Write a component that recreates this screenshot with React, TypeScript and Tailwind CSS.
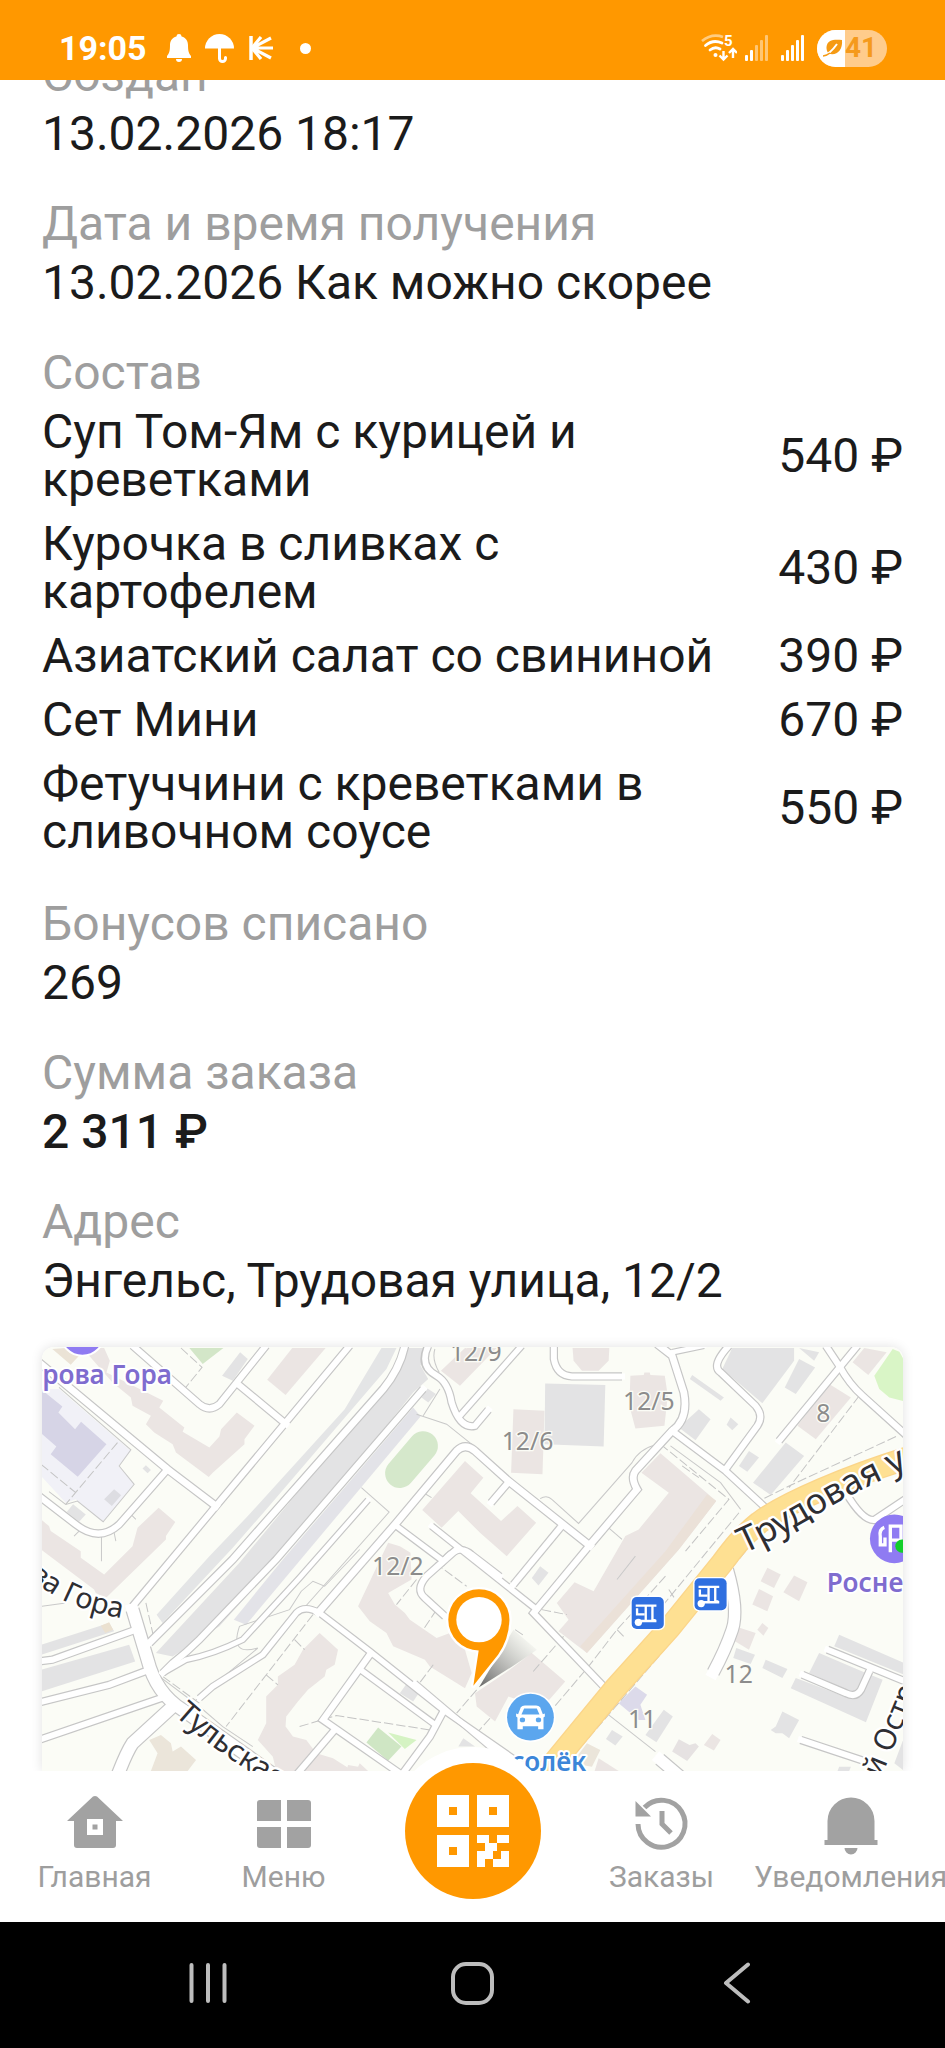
import type { ReactNode } from "react";

type OrderItem = {
  name: string;
  price: number;
};

type Road = {
  d: string;
  width: number;
};

type Shape = {
  points: string;
  fill: string;
};

const items: OrderItem[] = [
  { name: "Суп Том-Ям с курицей и креветками", price: 540 },
  { name: "Курочка в сливках с картофелем", price: 430 },
  { name: "Азиатский салат со свининой", price: 390 },
  { name: "Сет Мини", price: 670 },
  { name: "Фетуччини с креветками в сливочном соусе", price: 550 },
];

const PINK = "#ebe5e3";
const GRAY = "#e3e3e4";

// The map is split in four tiles, every tile has its own origin
const tiles = [
  {
    x: 0,
    y: 0,
    shapes: [
      { points: "126,180 180,180 395,365 358,410 405,465 310,578 230,510 200,520 126,440", fill: "#f1f1f7" },
      { points: "126,180 190,232 178,250 228,300 246,278 322,345 236,442 155,375 172,352 126,312", fill: "#d6d4e6" },
      { points: "160,60 215,107 240,80 200,57", fill: "#ebe3d6" },
      { points: "250,57 315,57 332,95 322,130 492,215 480,235 555,295 550,308 630,355 660,322 665,300 712,250 765,290 735,330 735,345 640,430 628,443 530,370 520,345 465,310 440,285 455,260 400,230 395,205 340,160", fill: PINK },
      { points: "878,57 978,57 858,198 803,152", fill: PINK },
      { points: "668,140 722,70 745,90 700,155", fill: GRAY },
      { points: "570,57 672,57 610,105", fill: "#d3e6c8" },
      { points: "1145,57 1190,57 1160,120 800,540 700,655 490,880 472,855 630,680 745,560 1035,240", fill: "#e4e5e6" },
      { points: "1225,57 1280,57 1262,110 1285,150 1240,190 840,690 660,890 520,980 470,970 720,700 1150,180", fill: GRAY },
      { points: "1240,235 1262,262 740,885 703,870 850,690", fill: "#e3e3e8" },
      { points: "1283,178 1308,195 1285,220 1265,205", fill: GRAY },
      { points: "440,408 455,422 445,432 430,418", fill: GRAY },
      { points: "345,480 366,498 338,530 315,510", fill: "#dddde2" },
      { points: "222,525 260,555 240,577 203,548", fill: GRAY },
      { points: "1395,395 1450,445 1412,492 1503,575 1552,530 1608,580 1520,680 1440,610 1375,545 1325,595 1267,542", fill: PINK },
      { points: "1395,57 1490,57 1380,170 1323,125", fill: PINK },
      { points: "126,570 150,590 155,605 245,665 245,685 315,735 400,650 415,595 478,535 528,578 500,620 500,630 320,805 290,790 285,780 126,660", fill: PINK },
    ],
  },
  {
    x: 1395,
    y: 0,
    shapes: [
      { points: "145,240 238,245 232,435 138,430", fill: PINK },
      { points: "240,163 420,168 415,352 238,345", fill: GRAY },
      { points: "322,57 432,57 430,95 400,125 350,125 325,95", fill: PINK },
      { points: "495,140 535,138 537,130 553,130 555,138 598,140 607,200 597,290 510,298 492,230", fill: PINK },
      { points: "800,57 985,57 985,95 890,222 770,120", fill: GRAY },
      { points: "1000,57 1060,70 1045,95", fill: GRAY },
      { points: "1000,90 1048,115 990,195 957,175", fill: GRAY },
      { points: "1195,57 1262,70 1207,138 1160,100", fill: PINK },
      { points: "1280,60 1300,68 1315,95 1315,217 1270,205 1240,180 1225,140", fill: "#d9f5c6" },
      { points: "1090,165 1155,205 1050,330 995,290", fill: PINK },
      { points: "680,138 775,205 765,215 673,150", fill: GRAY },
      { points: "700,240 735,270 690,333 640,295", fill: GRAY },
      { points: "795,265 818,285 800,303 783,287", fill: GRAY },
      { points: "850,365 880,385 845,427 820,410", fill: GRAY },
      { points: "960,340 1015,380 915,497 862,460", fill: GRAY },
      { points: "585,372 752,515 640,660 365,970 280,905 310,870 275,820 328,758 385,785 480,620 520,600 610,490 528,430", fill: PINK },
      { points: "725,495 752,515 640,660 365,970 345,950 600,665", fill: "#ebe1d8" },
    ],
  },
  {
    x: 0,
    y: 660,
    shapes: [
      { points: "1165,-20 1200,-10 1232,10 1235,90 1165,130 1185,165 1215,190 1230,210 1310,265 1350,250 1395,300 1415,370 1395,415 1290,350 1275,330 1180,290 1160,250 1110,215 1075,170", fill: PINK },
      { points: "960,250 1015,300 1005,345 980,360 975,380 925,420 895,455 860,500 858,530 880,560 920,570 950,610 1000,625 1060,663 830,663 820,620 775,570 800,520 800,440 835,405 835,380 885,345 910,300", fill: PINK },
      { points: "1040,663 1045,645 1075,650 1080,640 1105,663", fill: PINK },
      { points: "1225,395 1260,425 1240,455 1200,430", fill: GRAY },
      { points: "1390,565 1425,590 1375,590", fill: GRAY },
      { points: "1135,533 1205,590 1165,632 1100,578", fill: "#cfe6c4" },
      { points: "1165,548 1250,570 1215,597", fill: "#d5f3c3" },
      { points: "485,555 515,580 520,605 545,590 590,630 565,663 455,663 475,610 450,570", fill: "#ebe5da" },
      { points: "126,285 330,220 345,245 126,315", fill: GRAY },
      { points: "305,228 330,218 342,240 318,250", fill: "#ebe1d0" },
      { points: "126,360 390,285 408,335 126,425", fill: GRAY },
    ],
  },
  {
    x: 1395,
    y: 660,
    shapes: [
      { points: "120,370 200,310 300,395 230,475 130,440 90,515 35,470 30,430", fill: PINK },
      { points: "225,50 250,70 220,108 200,85", fill: GRAY },
      { points: "905,55 945,75 925,115 885,95", fill: PINK },
      { points: "985,78 1025,98 1000,155 953,128", fill: PINK },
      { points: "880,118 922,140 905,185 860,165", fill: PINK },
      { points: "890,220 908,235 893,258 875,240", fill: PINK },
      { points: "815,232 870,250 850,300 808,275", fill: PINK },
      { points: "812,295 868,315 855,343 803,325", fill: GRAY },
      { points: "900,330 965,358 950,385 890,355", fill: GRAY },
      { points: "1120,255 1315,340 1315,375 1105,290", fill: GRAY },
      { points: "1060,310 1200,370 1165,430 1030,370", fill: GRAY },
      { points: "990,385 1150,445 1200,370 1250,390 1200,517 975,415", fill: GRAY },
      { points: "950,485 1000,510 970,565 950,550 930,550 915,540 930,530", fill: GRAY },
      { points: "510,410 545,435 525,465 540,510 520,510 460,460", fill: "#dcdaea" },
      { points: "595,480 622,500 573,577 540,555", fill: GRAY },
      { points: "440,540 472,560 450,587 422,567", fill: GRAY },
      { points: "640,568 672,585 690,580 700,590 665,633 620,605", fill: "#e6e2e2" },
      { points: "740,552 765,570 745,602 715,585", fill: PINK },
      { points: "365,580 405,600 380,650 320,640", fill: "#ebe5da" },
      { points: "400,625 460,663 388,663", fill: PINK },
      { points: "1120,650 1155,650 1150,663 1115,663", fill: GRAY },
      { points: "1315,560 1315,663 1285,640", fill: GRAY },
    ],
  },
] as { x: number; y: number; shapes: Shape[] }[];

const roads: (Road & { x: number; y: number })[] = [
  { x: 0, y: 0, width: 20, d: "M120,100 L505,420 L650,530" },
  { x: 0, y: 0, width: 18, d: "M1050,50 L650,530 L400,830" },
  { x: 0, y: 0, width: 18, d: "M400,50 L600,225 Q630,250 660,225 L800,50" },
  { x: 0, y: 0, width: 18, d: "M715,165 L860,285" },
  { x: 0, y: 0, width: 18, d: "M120,500 L230,585 Q300,640 360,585 L505,420" },
  { x: 0, y: 0, width: 20, d: "M1215,50 Q1200,120 1150,180 L700,690 L450,940" },
  { x: 0, y: 0, width: 18, d: "M1270,180 L830,690 L600,930 Q560,970 520,1000 L490,1030" },
  { x: 0, y: 0, width: 18, d: "M1285,50 Q1255,110 1310,140 Q1345,160 1355,220 Q1380,300 1425,290 L1465,242" },
  { x: 0, y: 0, width: 16, d: "M1380,260 L1565,50" },
  { x: 0, y: 0, width: 14, d: "M1105,512 L900,745 L730,930 Q640,975 560,990 L490,1030" },
  { x: 0, y: 0, width: 20, d: "M955,850 L1190,580 L1370,365 Q1395,340 1425,365 L1525,455 L1770,650" },
  { x: 0, y: 0, width: 16, d: "M1190,590 L1330,695 Q1375,640 1415,675 L1500,740" },
  { x: 1395, y: 0, width: 20, d: "M375,645 L515,480 Q495,445 510,425 L620,305 Q670,270 655,190 L620,80 L575,45" },
  { x: 1395, y: 0, width: 14, d: "M620,70 L715,50" },
  { x: 1395, y: 0, width: 18, d: "M375,645 L205,850 L420,1075" },
  { x: 1395, y: 0, width: 16, d: "M-100,590 L215,840" },
  { x: 1395, y: 0, width: 18, d: "M285,595 L145,765" },
  { x: 1395, y: 0, width: 18, d: "M125,465 L78,520" },
  { x: 1395, y: 0, width: 18, d: "M266,50 V90 Q275,140 320,142 L470,142" },
  { x: 1395, y: 0, width: 18, d: "M620,305 L780,425 L910,545" },
  { x: 1395, y: 0, width: 18, d: "M790,50 Q735,110 765,130 L870,230 Q895,260 875,290 L780,420" },
  { x: 1395, y: 0, width: 18, d: "M1175,50 L940,335" },
  { x: 1395, y: 0, width: 18, d: "M1080,50 L1120,110 Q1150,165 1190,200 L1325,322" },
  { x: 1395, y: 0, width: 18, d: "M1140,490 Q1190,575 1225,572 L1325,505" },
  { x: 1395, y: 660, width: 34, d: "M785,60 Q820,180 800,240 Q780,300 743,368" },
  { x: 1395, y: 660, width: 18, d: "M1085,300 L1325,398" },
  { x: 1395, y: 660, width: 18, d: "M1010,375 L1140,430 Q1170,445 1185,420 L1210,365" },
  { x: 1395, y: 660, width: 18, d: "M1005,570 L1215,640" },
  { x: 1395, y: 660, width: 34, d: "M583,628 L650,685" },
  { x: 1395, y: 660, width: 14, d: "M-150,400 L180,680" },
  { x: 0, y: 660, width: 18, d: "M120,335 L160,330 L410,240" },
  { x: 0, y: 660, width: 18, d: "M120,458 L330,405 L450,360" },
  { x: 0, y: 660, width: 18, d: "M120,570 L500,440" },
  { x: 0, y: 660, width: 36, d: "M400,180 L445,330 Q470,430 550,480 L860,700" },
  { x: 0, y: 660, width: 36, d: "M520,470 L400,580 Q380,610 350,690" },
  { x: 0, y: 660, width: 16, d: "M600,445 L640,410 L790,315 L890,190 Q915,165 960,190 L1110,305 L1330,480 L1560,640" },
  { x: 0, y: 660, width: 18, d: "M1110,315 L970,510 L1200,670" },
  { x: 0, y: 660, width: 16, d: "M1085,362 L1300,520" },
  { x: 0, y: 660, width: 18, d: "M1330,485 L1290,560 L1205,675" },
  { x: 0, y: 660, width: 18, d: "M1005,540 L890,675" },
  { x: 0, y: 660, width: 18, d: "M1370,0 L1280,80 Q1245,120 1275,145 L1335,200" },
];

const paths = [
  { x: 0, y: 0, d: "M545,57 L608,115 L555,180 M355,340 L200,525 M126,405 L230,490" },
  { x: 1395, y: 0, d: "M1180,200 L970,475 M1290,322 L970,470 L880,515 M585,345 L790,510 L660,665 M650,410 L700,445 M820,550 L590,830" },
  { x: 0, y: 660, d: "M440,160 L465,270 M490,380 L600,460 M940,195 L680,530 M885,270 L915,300 M800,375 L835,405 M900,530 L1010,497 L1290,540 M1310,180 L1270,240 M1250,90 L1190,165 M1300,345 L1255,405 M1305,40 L1400,110 M1430,420 L1370,490" },
  { x: 1395, y: 660, d: "M840,5 L580,320 L270,680 M600,80 L455,240 L370,350 L200,550 M230,180 L305,195 M150,240 L180,260 M455,240 L480,265 M295,260 L200,370 M75,505 L35,550 M610,120 L630,150" },
];

const thinLines = [
  { x: 0, y: 0, d: "M1250,255 L1340,285 L1440,365 M1305,60 Q1295,90 1318,130 M1320,180 L1270,260 M1085,475 L1168,548 L900,850 M345,610 L350,635 M390,550 L410,570 M240,605 L225,620 M307,620 V695 M1262,485 L1295,505 M180,175 L395,362 L360,410 L405,465 L312,577 L235,515 L200,525 L150,487" },
  { x: 1395, y: 0, d: "M575,345 Q520,360 500,400 L340,582 L260,510 Q245,495 225,508 M615,350 L765,460 L825,540 M430,595 L470,630" },
  { x: 0, y: 660, d: "M590,450 L775,295 Q690,320 720,230 L870,180 L905,125 L940,95 L975,110 L1080,0 M126,170 L200,160 M480,380 L600,470 L670,530 L760,590" },
  { x: 1395, y: 660, d: "M430,495 L570,605 M510,20 L455,90" },
];

const houseNumbers = [
  { x: 1350, y: 95, text: "12/9" },
  { x: 1868, y: 243, text: "12/5" },
  { x: 1505, y: 362, text: "12/6" },
  { x: 1117, y: 737, text: "12/2" },
  { x: 2446, y: 277, text: "8" },
  { x: 2172, y: 1061, text: "12" },
  { x: 1883, y: 1195, text: "11" },
];

function BusStop({ x, y }: { x: number; y: number }) {
  return (
    <g transform={`translate(${x} ${y})`}>
      <rect x="-4" y="-4" width="104" height="104" rx="18" fill="#fff" />
      <rect width="96" height="96" rx="15" fill="#2f6fe0" />
      <path d="M12,26 H74 M16,34 V52 H38 M42,26 V74 M62,26 V74 M28,72 H74 M68,66 V74" fill="none" stroke="#fff" strokeWidth="7" />
      <circle cx="20" cy="76" r="11" fill="#fff" />
    </g>
  );
}

function AddressMap() {
  return (
    <svg
      viewBox="126 54 2583 1269"
      preserveAspectRatio="xMidYMin slice"
      className="block h-full w-full bg-[#fbfcf6]"
      role="img"
      aria-label="Энгельс, Трудовая улица, 12/2"
    >
      <defs>
        <path id="trudovaya" d="M836,672 C985,605 1080,535 1180,485 S1300,430 1420,365" transform="translate(1395 0)" />
        <path id="gora" d="M88,742 Q220,858 440,874" />
        <path id="tulskaya" d="M526,1156 Q650,1270 850,1385" />
        <linearGradient id="pinShadow" x1="0" y1="1" x2="1" y2="0">
          <stop offset="0" stopColor="#555" stopOpacity="0.9" />
          <stop offset="0.9" stopColor="#999" stopOpacity="0" />
        </linearGradient>
      </defs>

      {tiles.map((tile) => (
        <g key={`${tile.x}-${tile.y}`} transform={`translate(${tile.x} ${tile.y})`}>
          {tile.shapes.map((shape) => (
            <polygon key={shape.points} points={shape.points} fill={shape.fill} />
          ))}
        </g>
      ))}
      <line x1="1270" y1="350" x2="1200" y2="432" stroke="#d5e8cb" strokeWidth="88" strokeLinecap="round" />

      <g fill="none" stroke="#c9c9c9" strokeWidth="3">
        {thinLines.map((line) => (
          <path key={line.d} d={line.d} transform={`translate(${line.x} ${line.y})`} />
        ))}
      </g>
      <g fill="none" stroke="#c4c4c4" strokeWidth="3" strokeDasharray="28 9">
        {paths.map((path) => (
          <path key={path.d} d={path.d} transform={`translate(${path.x} ${path.y})`} />
        ))}
      </g>

      {/* road outlines first, so that the crossings stay open */}
      <g fill="none" stroke="#c6c6c6">
        {roads.map((road) => (
          <path key={road.d} d={road.d} strokeWidth={road.width + 7} transform={`translate(${road.x} ${road.y})`} />
        ))}
      </g>
      <g fill="none" stroke="#fff">
        {roads.map((road) => (
          <path key={road.d} d={road.d} strokeWidth={road.width} strokeLinecap="square" transform={`translate(${road.x} ${road.y})`} />
        ))}
      </g>
      <g fill="none" transform="translate(1395 0)">
        <path d="M1330,385 C1150,440 960,520 880,580 C830,620 800,660 770,700 L612,895 L450,1075 L240,1330" stroke="#fbd58a" strokeWidth="70" />
        <path d="M1330,385 C1150,440 960,520 880,580 C830,620 800,660 770,700 L612,895 L450,1075 L240,1330" stroke="#fee092" strokeWidth="62" />
      </g>

      <g fontFamily="'Noto Sans', sans-serif" fontSize="74" fill="#8c8c8c" stroke="#fbfcf6" strokeWidth="8" paintOrder="stroke">
        {houseNumbers.map((house) => (
          <text key={house.text} x={house.x} y={house.y}>{house.text}</text>
        ))}
      </g>
      <g fontFamily="'Noto Sans', sans-serif" fill="#2e2e33" stroke="#fff" strokeWidth="14" strokeLinejoin="round" paintOrder="stroke">
        <text fontSize="106"><textPath href="#trudovaya">Трудовая у</textPath></text>
        <text fontSize="86"><textPath href="#gora">ва Гора</textPath></text>
        <text fontSize="90"><textPath href="#tulskaya">Тульская</textPath></text>
        <text fontSize="90" transform="translate(2640 1345) rotate(-68)">й Остр</text>
      </g>
      <g fontFamily="'Noto Sans', sans-serif" fontWeight="600" fontSize="78" stroke="#fff" strokeWidth="12" strokeLinejoin="round" paintOrder="stroke">
        <text x="518" y="166" textAnchor="end" fill="#7f6ccf">рова Гора</text>
        <text x="2478" y="787" fill="#7f6ccf">Росне</text>
        <text x="1758" y="1322" textAnchor="end" fill="#3c86d8">солёк</text>
      </g>

      <circle cx="250" cy="14" r="66" fill="#8f7bf2" stroke="#fff" strokeWidth="6" />
      <BusStop x={1894} y={802} />
      <BusStop x={2082} y={746} />

      {/* petrol station */}
      <circle cx="2680" cy="628" r="73" fill="#8f7bf2" />
      <path d="M2668,668 V590 H2700 V632 H2668 M2650,594 Q2634,600 2638,622 V646 H2652 V624" fill="none" stroke="#fff" strokeWidth="10" />
      <circle cx="2703" cy="650" r="20" fill="#12cf2a" />

      {/* car wash */}
      <circle cx="1591" cy="1162" r="75" fill="#fff" />
      <circle cx="1591" cy="1162" r="70" fill="#5ba6ee" />
      <path
        fillRule="evenodd"
        fill="#fff"
        d="M1562,1132 Q1566,1127 1574,1127 H1608 Q1616,1127 1620,1132 L1628,1153 L1634,1151 V1160 L1630,1163 V1198 H1614 V1189 H1568 V1198 H1552 V1163 L1548,1160 V1151 L1554,1153 Z M1572,1136 L1564,1154 H1618 L1610,1136 Z M1559,1170 a8,7 0 1 0 16,0 a8,7 0 1 0 -16,0 Z M1607,1170 a8,7 0 1 0 16,0 a8,7 0 1 0 -16,0 Z"
      />

      {/* delivery pin */}
      <path d="M1437,1072 L1540,900 L1610,960 Q1540,1010 1437,1072 Z" fill="url(#pinShadow)" />
      <path
        d="M1437,779 A91,91 0 0 1 1528,872 Q1526,930 1494,975 L1420,1068 L1436,962 A91,91 0 0 1 1437,779 Z"
        fill="#ff9800"
        stroke="#fff"
        strokeWidth="14"
        paintOrder="stroke"
        strokeLinejoin="round"
      />
      <circle cx="1437" cy="870" r="68" fill="#fff" />
    </svg>
  );
}

function StatusBar() {
  return (
    <header className="flex h-20 shrink-0 items-center justify-between bg-[#ff9800] pt-4 pr-[58px] pl-[59px] text-white">
      <div className="flex items-center">
        <span className="text-[34px] leading-10 font-bold">19:05</span>
        <svg className="ml-5 h-[28px] w-[24px]" viewBox="0 0 24 28" fill="currentColor">
          <path d="M12 0a2.6 2.6 0 0 1 2.6 2.4C19 3.5 21 7 21 11c0 6 .8 8.500 3 11v2H0v-2c2.200-2.500 3-5 3-11 0-4 2-7.500 6.400-8.600A2.600 2.600 0 0 1 12 0zM9 25h6a3 3 0 0 1-6 0z" />
        </svg>
        <svg className="ml-[14px] h-[29px] w-[29px]" viewBox="0 0 29 29" fill="none">
          <path d="M0 14.500a14.500 14.500 0 0 1 29 0z" fill="currentColor" />
          <path d="M14.500 13v11.500a3 3 0 0 0 6 0v-1" stroke="currentColor" strokeWidth="3" strokeLinecap="round" />
        </svg>
        <svg className="ml-[15px] h-6 w-6" viewBox="0 0 24 24" fill="none" stroke="currentColor">
          <path d="M2 0v24" strokeWidth="3.500" />
          <path d="M3 12L12 1M3 12L22 2M3 12h21M3 12l19 10M3 12l9 11" strokeWidth="3.200" />
        </svg>
        <span className="ml-[27px] size-[11px] rounded-full bg-white" />
      </div>
      <div className="flex items-center">
        <svg className="h-7 w-9" viewBox="0 0 36 28" fill="none" stroke="currentColor" strokeWidth="2.800">
          <path d="M1 7Q11 -1 22 3" opacity=".5" />
          <path d="M4.500 11.500Q12 5 21 9M9 16q5-4 10-1" strokeLinecap="round" />
          <circle cx="14.500" cy="21" r="2" fill="currentColor" stroke="none" />
          <path d="M22.500 17v8m-4-3.500l4 4 4-4M32 24v-9m-4 4l4-4 4 4" strokeWidth="2.400" />
          <text x="23" y="12" fontSize="15" fontWeight="700" fill="currentColor" stroke="none">5</text>
        </svg>
        <SignalIcon active={2} className="ml-2 h-[26px] w-[24px]" />
        <SignalIcon active={5} className="ml-3 h-[26px] w-[24px]" />
        <div className="ml-3 flex h-[37px] w-[70px] items-center overflow-hidden rounded-full bg-[#ffcc8c] text-[#f59a1c]">
          <div className="flex h-full w-7 items-center justify-end bg-white pr-[2px]">
            <svg className="h-[18px] w-5" viewBox="0 0 20 18">
              <path d="M19 1C11 0 4 1 3.500 8c-.2 3 .8 5 2 6.500C13 17 20 12 19 1z" fill="#f59a13" />
              <path d="M0 17Q7 15 14 5" fill="none" stroke="#fff" strokeWidth="2" />
              <path d="M0 17q4-.5 7-3" fill="none" stroke="#f59a13" strokeWidth="1.600" />
            </svg>
          </div>
          <span className="text-[28px] leading-none font-bold">41</span>
        </div>
      </div>
    </header>
  );
}

function SignalIcon({ active, className }: { active: number; className: string }) {
  return (
    <svg className={className} viewBox="0 0 24 26" fill="currentColor">
      {[6, 11, 16, 21, 26].map((height, i) => (
        <rect key={height} x={i * 5} y={26 - height} width="3" height={height} rx="1" opacity={i < active ? 1 : 0.45} />
      ))}
    </svg>
  );
}

function Field({ label, children }: { label: string; children: ReactNode }) {
  return (
    <section>
      <h2 className="text-[#9e9e9e]">{label}</h2>
      <p className="mt-[11px]">{children}</p>
    </section>
  );
}

function TabButton({ label, children }: { label: string; children: ReactNode }) {
  return (
    <button type="button" className="flex min-w-0 flex-1 flex-col items-center pt-6 text-[#9e9e9e]">
      <svg className="size-16" viewBox="0 0 64 64" fill="#a2a2a2">
        {children}
      </svg>
      <span className="text-[30px] leading-9 whitespace-nowrap">{label}</span>
    </button>
  );
}

export default function App() {
  return (
    <div className="flex h-screen flex-col overflow-hidden bg-white font-['Roboto',sans-serif] text-[#1b1b1b]">
      <StatusBar />

      <main className="flex min-h-0 flex-1 flex-col overflow-hidden px-[42px] text-5xl leading-12">
        {/* the list is scrolled, the first label goes under the header */}
        <div className="-mt-[29px] flex flex-col gap-[42px]">
          <Field label="Создан">13.02.2026 18:17</Field>
          <Field label="Дата и время получения">13.02.2026 Как можно скорее</Field>
        </div>

        <h2 className="mt-[42px] text-[#9e9e9e]" id="items-title">Состав</h2>
        <table className="mt-[3px] w-full" aria-labelledby="items-title">
          <tbody>
            {items.map((item) => (
              <tr key={item.name}>
                <td className="py-2">{item.name}</td>
                <td className="py-2 pl-12 text-right whitespace-nowrap">{item.price} ₽</td>
              </tr>
            ))}
          </tbody>
        </table>

        <div className="mt-9 flex flex-col gap-[42px]">
          <Field label="Бонусов списано">269</Field>
          <Field label="Сумма заказа">
            <span className="font-medium">2 311 ₽</span>
          </Field>
          <Field label="Адрес">Энгельс, Трудовая улица, 12/2</Field>
        </div>

        <div className="mt-[42px] min-h-0 flex-1 overflow-hidden rounded-t-xl shadow-[0_0_12px_rgba(0,0,0,0.12)]">
          <AddressMap />
        </div>
      </main>

      <nav className="relative flex h-[151px] shrink-0 bg-white">
        <TabButton label="Главная">
          <path
            fillRule="evenodd"
            d="M30 1.500q2-1 4 0L60 26H53v24q0 3-3 3H14q-3 0-3-3V26H4zM24 24v16h16V24zM29.500 29.500h5v5h-5z"
          />
        </TabButton>
        <TabButton label="Меню">
          <path d="M8 5h21v21H5V8q0-3 3-3zM35 5h21q3 0 3 3v18H35zM5 32h24v21H8q-3 0-3-3zM35 32h24v18q0 3-3 3H35z" />
        </TabButton>
        <div className="flex-1">
          <button
            type="button"
            aria-label="QR-код"
            className="absolute -top-2 left-1/2 flex size-[136px] -translate-x-1/2 items-center justify-center rounded-full bg-[#ff9800] shadow-[0_0_0_16px_#fff]"
          >
            <svg className="size-[72px]" viewBox="0 0 18 18" fill="#fff" fillRule="evenodd">
              <path d="M0 0h8v8H0zM3 3v2h2V3zM10 0h8v8h-8zM13 3v2h2V3zM0 10h8v8H0zM3 13v2h2v-2z" />
              <path d="M10 10h3v2h2v-2h3v2h-3v2h-1v2h2v-2h2v4h-4v-2h-2v2h-2v-4h2v-2h-2z" />
            </svg>
          </button>
        </div>
        <TabButton label="Заказы">
          <path d="M8 29A23.500 23.500 0 1 0 14.500 12.500" fill="none" stroke="#a2a2a2" strokeWidth="5" />
          <path d="M5.500 6v15.500H21z" />
          <path d="M32 16v13l9 9" fill="none" stroke="#a2a2a2" strokeWidth="5" />
        </TabButton>
        <TabButton label="Уведомления">
          <path d="M8.500 45V26a23.500 23.500 0 0 1 47 0v19h3v5h-53v-5zM25.500 53h13a6.500 6.500 0 0 1-13 0z" />
        </TabButton>
      </nav>

      <footer className="grid h-[126px] shrink-0 grid-cols-3 bg-black px-[76px] pb-1">
        <button type="button" aria-label="Недавние" className="flex items-center justify-center">
          <svg className="h-[42px] w-10" viewBox="0 0 40 42" stroke="#bdbdbd" strokeWidth="4" strokeLinecap="round">
            <path d="M3.500 3v36M20 3v36M36.500 3v36" />
          </svg>
        </button>
        <button type="button" aria-label="Домой" className="flex items-center justify-center">
          <span className="size-[43px] rounded-[15px] border-4 border-[#bdbdbd]" />
        </button>
        <button type="button" aria-label="Назад" className="flex items-center justify-center">
          <svg className="h-[42px] w-7" viewBox="0 0 28 42" fill="none" stroke="#bdbdbd" strokeWidth="4" strokeLinecap="round" strokeLinejoin="round">
            <path d="M25 2.500L3 21l22 18.500" />
          </svg>
        </button>
      </footer>
    </div>
  );
}
